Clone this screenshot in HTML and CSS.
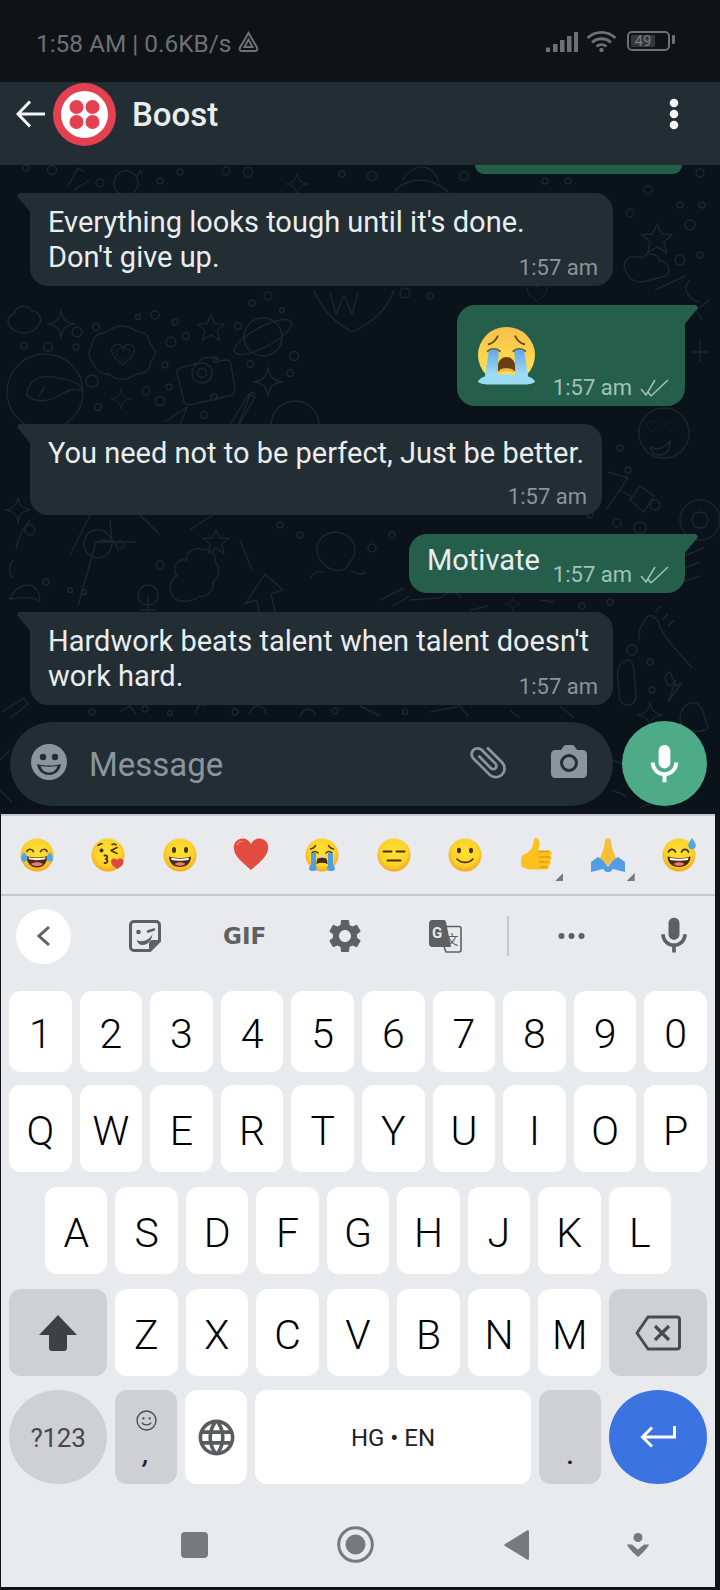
FILE: index.html
```html
<!DOCTYPE html>
<html lang="en">
<head>
<meta charset="utf-8">
<title>Boost</title>
<link rel="stylesheet" href="styles.css">
</head>
<body>
<svg class="defs" aria-hidden="true">
  <defs>
    <radialGradient id="face" cx="50%" cy="42%" r="58%">
      <stop offset="0%" stop-color="#fee133"/>
      <stop offset="70%" stop-color="#fdd22a"/>
      <stop offset="100%" stop-color="#f3a81c"/>
    </radialGradient>
    <linearGradient id="bigface" x1="0" y1="0" x2="0" y2="1">
      <stop offset="0%" stop-color="#f8c04a"/>
      <stop offset="55%" stop-color="#fbd64f"/>
      <stop offset="100%" stop-color="#fbe35d"/>
    </linearGradient>
    <linearGradient id="tear" x1="0" y1="0" x2="0" y2="1">
      <stop offset="0%" stop-color="#5fa8e8"/>
      <stop offset="100%" stop-color="#a6e0f5"/>
    </linearGradient>
    <symbol id="e-joy" viewBox="0 0 36 36">
      <circle cx="18" cy="18" r="16.5" fill="url(#face)"/>
      <path d="M8 14.5c1-3 5-3 6.5 0M21.5 14.5c1.500-3 5.500-3 6.500 0" fill="none" stroke="#5b3a12" stroke-width="1.700" stroke-linecap="round"/>
      <path d="M7.500 19c6.500 2 14.500 2 21 0 0 7-4.500 11.500-10.500 11.500S7.500 26 7.500 19z" fill="#4a2a12"/>
      <path d="M9.500 20.300c5 1.200 12 1.200 17 0l-.5 2c-5 1.100-11 1.100-16 0z" fill="#fff"/>
      <path d="M12 27c3-2.500 9-2.500 12 0-3 2.800-9 2.800-12 0z" fill="#ee7a7e"/>
      <path d="M5 15c2.500 3 4 5 3.500 7.500-.6 2.300-4.500 3-6 1C.8 21.400 3 17.500 5 15zM31 15c-2.500 3-4 5-3.500 7.500.6 2.300 4.500 3 6 1 1.700-2.100-.5-6-2.500-8.500z" fill="#52a8ea"/>
    </symbol>
    <symbol id="e-kiss" viewBox="0 0 36 36">
      <circle cx="18" cy="18" r="16.500" fill="url(#face)"/>
      <circle cx="11.500" cy="13.500" r="2" fill="#4a2d10"/>
      <path d="M8 8.500c1-1.200 2.500-1.800 4-1.800M21 13.500l6-3M21 13.500l6 3M22 7.500c1.500-.6 3-.4 4 .4" fill="none" stroke="#4a2d10" stroke-width="1.500" stroke-linecap="round"/>
      <path d="M14.500 18.500c2.800-.4 4 1.700 1.500 3.500 2.500 1.500 1.500 4.500-1.500 4" fill="none" stroke="#4a2d10" stroke-width="1.800" stroke-linecap="round"/>
      <path d="M27.500 32c-4-2-6.500-5-6.500-7.500 0-3.500 4.500-4 6-1.500 1.800-2.500 6.500-1.800 6.500 1.800 0 3-3 5.700-6 7.200z" fill="#df4b3e"/>
    </symbol>
    <symbol id="e-grin" viewBox="0 0 36 36">
      <circle cx="18" cy="18" r="16.500" fill="url(#face)"/>
      <ellipse cx="12" cy="13" rx="2" ry="3" fill="#4a2d10"/>
      <ellipse cx="24" cy="13" rx="2" ry="3" fill="#4a2d10"/>
      <path d="M7 19.500c7 2 15 2 22 0 0 6.500-4.500 10.500-11 10.500S7 26 7 19.500z" fill="#4a2a12"/>
      <path d="M9 20.700c5.500 1.300 12.500 1.300 18 0l-.6 2.200c-5.400 1-11.400 1-16.800 0z" fill="#fff"/>
      <path d="M12.500 27c3-2.200 8-2.200 11 0-3 2.400-8 2.400-11 0z" fill="#ee7a7e"/>
    </symbol>
    <symbol id="e-heart" viewBox="0 0 36 36">
      <path d="M18 33C9 25 .8 19 .8 10.500 .8 5 5 1.500 9.500 1.500c3.800 0 6.800 2 8.500 5.500 1.700-3.500 4.700-5.500 8.500-5.500C31 1.500 35.200 5 35.200 10.500 35.200 19 27 25 18 33z" fill="#e24c3e"/>
      <path d="M4 8c1-2.500 3-3.500 5-3.500" fill="none" stroke="#ee7a6e" stroke-width="1.500" stroke-linecap="round"/>
    </symbol>
    <symbol id="e-sob" viewBox="0 0 36 36">
      <circle cx="18" cy="18" r="16.500" fill="url(#face)"/>
      <path d="M6.500 12c2-.3 4-1.500 5-3.500M29.500 12c-2-.3-4-1.500-5-3.500M8 16c1.500-2 4.500-2 6 0M22 16c1.500-2 4.500-2 6 0" fill="none" stroke="#5b3a12" stroke-width="1.600" stroke-linecap="round"/>
      <path d="M12.500 27c0-5 2-8 5.500-8s5.500 3 5.500 8c-3.500-1.600-7.500-1.600-11 0z" fill="#4a2a12"/>
      <path d="M14 21.500c2.500-1.200 5.500-1.200 8 0-.4-1-1-1.800-1.800-2.200h-4.400c-.8.400-1.400 1.200-1.800 2.200z" fill="#fff"/>
      <path d="M7 16h5v13c1.500 1 1.500 4.500-2 5-3 .5-5.500-.8-5-3 .3-1.500 1.500-2.300 2-3zM29 16h-5v13c-1.500 1-1.500 4.500 2 5 3 .5 5.500-.8 5-3-.3-1.500-1.500-2.300-2-3z" fill="#4e9fe6"/>
    </symbol>
    <symbol id="e-flat" viewBox="0 0 36 36">
      <circle cx="18" cy="18" r="16.500" fill="url(#face)"/>
      <path d="M7.500 14.500h8M20.500 14.500h8M11.500 23.500h13" fill="none" stroke="#4a2d10" stroke-width="2" stroke-linecap="round"/>
    </symbol>
    <symbol id="e-smile" viewBox="0 0 36 36">
      <circle cx="18" cy="18" r="16.500" fill="url(#face)"/>
      <ellipse cx="12" cy="13.500" rx="2" ry="2.800" fill="#4a2d10"/>
      <ellipse cx="24" cy="13.500" rx="2" ry="2.800" fill="#4a2d10"/>
      <path d="M10 22c4 4.500 12 4.500 16 0" fill="none" stroke="#4a2d10" stroke-width="1.600" stroke-linecap="round"/>
    </symbol>
    <symbol id="e-thumb" viewBox="0 0 36 36">
      <path d="M4 18c4-1.500 7-4 9-7.500 1.500-3 1.500-5.500 2-8 .3-2 5-2 5.500 2.500.4 3.500-.8 6-1.500 8.500h11c3 0 3.500 4 1 5 2 1 2 4.500-.4 5 1.500 1.300 1 4.300-1 4.700.8 1.800-.3 4.300-2.600 4.300H14c-5 0-8-1.500-11-2.500C1.500 29 1.500 20 4 18z" fill="#fcc21b"/>
      <path d="M20 14.500h9.500M20.500 20h10M20.500 25h9.500M21 30h7" fill="none" stroke="#e59a11" stroke-width="1.300" stroke-linecap="round"/>
    </symbol>
    <symbol id="e-pray" viewBox="0 0 36 36">
      <path d="M1 35V25l7-5 5 3 5 7v5h-2l-3-3zM35 35V25l-7-5-5 3-5 7v5h2l3-3z" fill="#519ee6"/>
      <path d="M17.500 1c-2 0-2.500 2-3 6-.6 4.500-2.500 10-4.500 14l4 3 3.500 5zM18.500 1c2 0 2.500 2 3 6 .6 4.500 2.500 10 4.500 14l-4 3-3.500 5z" fill="#fbc02d"/>
      <path d="M18 2v26" stroke="#e59a11" stroke-width=".8"/>
    </symbol>
    <symbol id="e-sweat" viewBox="0 0 36 36">
      <circle cx="18" cy="18" r="16.500" fill="url(#face)"/>
      <path d="M7.500 15c1.500-3.500 5.500-3.500 7 0M20.500 15c1.500-3.500 5.500-3.500 7 0" fill="none" stroke="#4a2d10" stroke-width="1.700" stroke-linecap="round"/>
      <path d="M6.500 19.500c7.500 2 15.500 2 23 0 0 6.500-4.800 10.500-11.500 10.500S6.500 26 6.500 19.500z" fill="#4a2a12"/>
      <path d="M8.500 20.700c6 1.300 13 1.300 19 0l-.6 2.200c-5.800 1-12 1-17.800 0z" fill="#fff"/>
      <path d="M12.500 27c3-2.200 8-2.200 11 0-3 2.400-8 2.400-11 0z" fill="#ee7a7e"/>
      <path d="M31 1c1.800 3 3.800 5 3.800 7.500 0 2.200-1.800 3.700-3.800 3.700s-3.800-1.500-3.800-3.700C27.200 6 29.200 4 31 1z" fill="#4fa5e8"/>
    </symbol>
    <path id="mic-shape" d="M12 14c1.660 0 3-1.340 3-3V5c0-1.660-1.340-3-3-3S9 3.340 9 5v6c0 1.660 1.340 3 3 3zm5-3c0 2.760-2.240 5-5 5s-5-2.240-5-5H5c0 3.530 2.610 6.430 6 6.920V21h2v-3.080c3.390-.49 6-3.390 6-6.920h-2z"/>
    <symbol id="star5" viewBox="0 0 32 32"><path d="M16 2l4 9 10 1-7.500 7 2.500 10-9-5.500L7 29l2.500-10L2 12l10-1z"/></symbol>
    <symbol id="star4" viewBox="0 0 32 32"><path d="M16 1c1 8 3 13 15 15-11 1-14 6-15 15-1-9-4-14-15-15 12-2 14-7 15-15z"/></symbol>
    <symbol id="heart-o" viewBox="0 0 32 32"><path d="M16 28C8 22 2 17 2 10c0-4.500 3.500-7 7-7 3 0 5.500 1.500 7 5 1.500-3.500 4-5 7-5 3.500 0 7 2.500 7 7 0 7-6 12-14 18z"/></symbol>
  </defs>
</svg>

<div class="phone">
  <div class="status">
    <span class="status-text">1:58 AM | 0.6KB/s</span>
    <svg class="i-drive" viewBox="0 0 21 22"><path d="M10.500 2L19 16.500c.8 1.800 0 3.500-2 3.500H4c-2 0-2.800-1.700-2-3.500zM10.500 8.500L6.500 16h8z" fill="none" stroke="#6d7173" stroke-width="2"/></svg>
    <div class="status-right">
      <svg class="i-signal" viewBox="0 0 32 20"><path d="M0 15.500h4V20H0zM7 12h4.500v8H7zM14 8h4.500v12H14zM21 4h4.500v16H21zM28 0h4v20h-4z" fill="#6d7173"/></svg>
      <svg class="i-wifi" viewBox="0 0 31 22"><path d="M1.500 8c8-7.500 20-7.500 28 0M6 12.500c5.500-5 13.500-5 19 0M10.500 16.500c3-2.500 7-2.500 10 0" fill="none" stroke="#6d7173" stroke-width="2.800"/><circle cx="15.500" cy="20" r="2.200" fill="#6d7173"/></svg>
      <div class="battery"><span class="battery-level">49</span></div>
    </div>
  </div>

  <div class="header">
    <svg class="i-back" viewBox="0 0 30 28"><path d="M29 14H3M14 1.500L2 14l12 12.500" fill="none" stroke="#f2f4f5" stroke-width="3"/></svg>
    <svg class="avatar" viewBox="0 0 63 63">
      <circle cx="31.500" cy="31.500" r="31.500" fill="#e5404f"/>
      <circle cx="31.500" cy="31.500" r="23.500" fill="#fff"/>
      <circle cx="23.500" cy="24" r="7" fill="#e5404f"/><circle cx="39.500" cy="24" r="7" fill="#e5404f"/>
      <circle cx="23.500" cy="39" r="7" fill="#e5404f"/><circle cx="39.500" cy="39" r="7" fill="#e5404f"/>
    </svg>
    <span class="name">Boost</span>
    <svg class="i-kebab" viewBox="0 0 10 32"><circle cx="5" cy="5" r="4.300" fill="#f2f4f5"/><circle cx="5" cy="16" r="4.300" fill="#f2f4f5"/><circle cx="5" cy="27" r="4.300" fill="#f2f4f5"/></svg>
  </div>

  <div class="chat">
    <svg class="wallpaper" viewBox="0 165 720 649" aria-hidden="true">
      <g class="doodle">
        <path d="M14 330c-8-4-8-14 0-16 2-9 14-10 18-3 8 0 11 10 6 15-4 7-16 9-24 4z"/>
        <use href="#star4" x="46" y="309" width="30" height="30"/>
        <circle cx="77" cy="332" r="5"/><circle cx="96" cy="327" r="3.500"/><circle cx="48" cy="347" r="4.500"/><circle cx="24" cy="346" r="3"/><circle cx="76" cy="347" r="3"/>
        <path d="M122 326c8 0 10 4 15 5 6 1 12 4 12 10 0 3 6 6 6 12s-5 8-5 12c0 7-8 9-14 9-5 3-10 7-15 5-5 1-9-3-13-5-7 0-13-4-14-10-3-3-5-6-5-11 0-4 3-7 4-12 1-6 8-8 13-9 4-2 9-6 16-6z"/>
        <use href="#heart-o" x="108" y="342" width="30" height="26"/>
        <use href="#heart-o" x="114" y="347" width="18" height="16"/>
        <path d="M180 368l18-5 5-5 12-1 4 4 7-1c3 0 5 2 5 4l4 26c0 3-1 4-3 5l-42 10c-3 0-5-1-6-3l-7-29c0-3 1-4 3-5z"/>
        <circle cx="202" cy="373" r="10"/><circle cx="202" cy="373" r="4.500"/><circle cx="216" cy="360" r="2.500"/>
        <use href="#star5" x="196" y="313" width="30" height="30"/>
        <circle cx="171" cy="342" r="5"/><circle cx="186" cy="336" r="3.500"/><circle cx="175" cy="322" r="3"/><circle cx="155" cy="315" r="4"/><circle cx="138" cy="317" r="2.500"/>
        <circle cx="263" cy="337" r="19"/><ellipse cx="263" cy="337" rx="32" ry="10" transform="rotate(-28 263 337)"/>
        <use href="#star4" x="252" y="365" width="32" height="34"/>
        <circle cx="250" cy="364" r="3.500"/><circle cx="282" cy="310" r="2.500"/><circle cx="294" cy="356" r="4.500"/><circle cx="290" cy="373" r="3.500"/><circle cx="238" cy="326" r="3.500"/>
        <circle cx="45" cy="392" r="38"/><path d="M27 395c0-14 12-20 25-18 15 2 28 5 31 14-8-4-16 0-23 4-10 6-25 9-33 0z"/><path d="M38 397c3-3 4-7 7-10"/>
        <circle cx="92" cy="381" r="6"/><circle cx="98" cy="407" r="3.500"/><use href="#star4" x="110" y="388" width="22" height="22"/>
        <circle cx="146" cy="391" r="4"/><circle cx="160" cy="401" r="4.500"/><circle cx="169" cy="387" r="3"/><circle cx="165" cy="365" r="3"/><circle cx="204" cy="415" r="3.500"/><circle cx="214" cy="397" r="3"/>
        <path d="M165 422l22-15-9 24M230 425l-2 3 21-34 6 3-18 31M240 425l-3 3 14-36 5 2"/>
        <circle cx="295" cy="425" r="24"/>
        <path d="M400 186l8-4a24 12 0 0 1 24 0l8 4c6 3 10 6 8 10-3 4-10 4-20 3-12 0-28 0-32-5-1-3 1-6 4-8z"/>
        <path d="M402 181c3-8 13-14 20-14s14 6 16 14"/>
        <use href="#star4" x="285" y="172" width="24" height="24"/>
        <circle cx="100" cy="183" r="4"/><circle cx="52" cy="170" r="4.500"/><circle cx="26" cy="168" r="3"/><circle cx="160" cy="181" r="3"/><circle cx="180" cy="172" r="3"/><circle cx="226" cy="171" r="4"/><circle cx="248" cy="172" r="4.500"/><circle cx="342" cy="174" r="3"/><circle cx="372" cy="176" r="4.500"/><circle cx="464" cy="176" r="4.500"/><circle cx="545" cy="181" r="3"/><circle cx="568" cy="181" r="3"/>
        <path d="M138 183a12 12 0 1 1 0-.1zM136 178l4-7 3 3M90 180l-16 10M68 186l10-18 6 4"/>
        <path d="M330 292l6 22 8-18 8 18 6-22M314 290c8 20 20 32 38 42 22-10 36-24 42-42"/>
        <use href="#heart-o" x="525" y="282" width="24" height="22"/>
        <circle cx="405" cy="293" r="5"/><circle cx="430" cy="296" r="3"/><circle cx="268" cy="296" r="4"/><circle cx="252" cy="303" r="3"/>
        <use href="#star5" x="640" y="222" width="34" height="34"/><circle cx="630" cy="213" r="4"/><circle cx="648" cy="190" r="4"/><circle cx="700" cy="173" r="4"/><circle cx="690" cy="225" r="5"/><circle cx="702" cy="205" r="3"/><circle cx="680" cy="205" r="3"/>
        <path d="M624 265c2-8 10-10 18-7 4-6 16-5 18 3 8 0 12 10 6 15l-24 6c-8 0-16-4-18-17z"/>
        <circle cx="680" cy="260" r="5"/><circle cx="700" cy="255" r="3"/><path d="M655 290l30-14M690 280c-10 10 0 20 10 22M702 320l-6-10 14-10"/>
        <path d="M700 340v22M708 352h-16"/>
        <circle cx="664" cy="433" r="25"/><use href="#heart-o" x="645" y="420" width="14" height="13"/><use href="#heart-o" x="663" y="420" width="14" height="13"/><path d="M650 447c8 4 14 2 20-6 0 10-4 14-10 14s-9-3-10-8z"/>
        <circle cx="620" cy="448" r="3"/><circle cx="628" cy="470" r="3"/><path d="M608 472l20 6-22 32M620 490l14 8"/><path d="M630 500l14 12 10-16-14-10z"/>
        <circle cx="655" cy="505" r="5"/><circle cx="700" cy="520" r="20"/><circle cx="700" cy="520" r="8"/><circle cx="640" cy="528" r="6"/><path d="M684 556l20-8M680 570l20-8M676 584l24-8"/>
        <circle cx="617" cy="523" r="4"/><circle cx="590" cy="515" r="3"/>
        <path d="M640 640c-4-10 4-18 8-24 4-2 12 4 12 12 8 14 22 28 32 40M655 612l6-6M662 620l6-6M668 626l6-6"/>
        <path d="M630 660c-10 0-14 8-12 20l2 20c4 8 16 6 16-4l-2-24c0-6-2-10-4-12z"/>
        <circle cx="632" cy="650" r="5"/><circle cx="650" cy="662" r="3"/><circle cx="652" cy="690" r="3"/><path d="M670 672c-8 4-4 12 0 14l6-6-8 22 14-20-6 4z"/>
        <path d="M680 720c0-14 10-20 18-16 6 4 6 14 10 24 0 3-24 8-28-8z"/><use href="#star4" x="636" y="700" width="28" height="30"/>
        <path d="M14 560c-6 4-6 14 0 18M30 520c-6 8-12 16-14 30"/><use href="#star4" x="4" y="493" width="28" height="34"/>
        <path d="M30 585c-8 0-16 4-20 14 12-2 24-2 30 2 0-8-4-14-10-16z"/>
        <circle cx="46" cy="582" r="3"/><path d="M78 606l18-64h40"/><path d="M96 530a14 14 0 1 0 1-.1zM100 540l22 2M110 520l2 22"/><circle cx="70" cy="590" r="2.500"/><circle cx="84" cy="592" r="2.500"/>
        <path d="M148 585a10 10 0 1 0 .1 0zM148 596v14M140 610h16"/>
        <path d="M177 600c-10-6-8-20 0-24-6-8 0-18 10-16-2-8 8-14 16-10 6-2 14 4 12 12 6 6 4 16-2 20 2 8-6 16-14 14-6 6-16 6-22 4z"/>
        <path d="M245 604l20-30 18 16-12 4 4 18-16 2-2-14z"/>
        <path d="M320 560c-8-14 0-26 14-28 14 0 24 10 20 24l-8 12c-4 4-18 4-26-8zM310 578c4-6 8-8 14-6M350 570c6 4 12 6 16 2"/>
        <path d="M380 600l24-12M392 606l18-10M140 515l20 20M190 530l24-16M240 540l12 30M90 515l-20 40"/>
        <use href="#star5" x="202" y="528" width="28" height="28"/>
        <circle cx="30" cy="530" r="5"/><circle cx="120" cy="545" r="4"/><circle cx="160" cy="565" r="4"/><circle cx="280" cy="525" r="3"/><circle cx="300" cy="535" r="3"/><circle cx="372" cy="548" r="4"/><circle cx="392" cy="535" r="3"/>
        <path d="M410 600l30-2 12-8 10 8M470 610l18-4M540 600l14 2"/>
        <use href="#star4" x="505" y="596" width="16" height="16"/><circle cx="582" cy="606" r="3"/><circle cx="610" cy="602" r="3"/>
        <path d="M2 712l22-14 4 6-18 14M120 712l10-6 6 8M195 714c2-8 6-12 10-8M250 714a8 8 0 0 1 16 0M300 716c4-8 12-10 16 0M360 706l20 10M430 712l30-6 8 10M510 710l10 8M560 706l14 12"/>
        <circle cx="92" cy="712" r="3"/><circle cx="145" cy="709" r="3"/><circle cx="170" cy="713" r="2.500"/><circle cx="235" cy="712" r="3"/><circle cx="335" cy="711" r="3"/><circle cx="405" cy="712" r="2.500"/>
        <path d="M0 760l10-10M0 790l12 12M612 760l10 4M612 790l14 6M640 808c4-4 20-6 30 0"/>
      </g>
    </svg>

    <div class="strip"></div>

    <div class="bubble in wide-in">
      <p class="msg">Everything looks tough until it's done.<br>Don't give up.</p>
      <span class="time overlap">1:57 am</span>
    </div>

    <div class="bubble out emoji-bubble">
      <svg class="big-sob" viewBox="0 0 60 60">
        <ellipse cx="30" cy="29" rx="29" ry="28.500" fill="url(#bigface)"/>
        <path d="M12 18c4-1 7-4 9-8M48 18c-4-1-7-4-9-8" fill="none" stroke="#6d4a1c" stroke-width="2" stroke-linecap="round"/>
        <path d="M11 25c3-3 9-3 12 0M37 25c3-3 9-3 12 0" fill="none" stroke="#6d4a1c" stroke-width="2" stroke-linecap="round"/>
        <path d="M20 46c0-9 4-15 10-15s10 6 10 15c-6-2.500-14-2.500-20 0z" fill="#6a3d12"/>
        <path d="M23 44c4-2 10-2 14 0l1 3c-5-2-11-2-16 0z" fill="#f3b63c"/>
        <path d="M12 25c3-2 7-2 10 0l-1 26H8zM38 25c3-2 7-2 10 0l4 26H39z" fill="url(#tear)"/>
        <path d="M1 56c2-4 6-5 10-6 12-2 26-2 38 0 4 1 8 2 10 6-1 2-6 3-10 3H11c-4 0-9-1-10-3z" fill="#9bdcf3"/>
      </svg>
      <div class="meta">
        <span class="time out-time">1:57 am</span>
        <svg class="i-checks" viewBox="0 0 29 18"><path d="M1 10l5 6L15 1M11 17L28 1M8 13l3 4" fill="none" stroke="#a0c4b6" stroke-width="1.500"/></svg>
      </div>
    </div>

    <div class="bubble in narrow-in">
      <p class="msg">You need not to be perfect, Just be better.</p>
      <span class="time below">1:57 am</span>
    </div>

    <div class="bubble out text-out">
      <p class="msg out-msg">Motivate</p>
      <div class="meta">
        <span class="time out-time">1:57 am</span>
        <svg class="i-checks" viewBox="0 0 29 18"><path d="M1 10l5 6L15 1M11 17L28 1M8 13l3 4" fill="none" stroke="#a0c4b6" stroke-width="1.500"/></svg>
      </div>
    </div>

    <div class="bubble in wide-in">
      <p class="msg">Hardwork beats talent when talent doesn't<br>work hard.</p>
      <span class="time overlap">1:57 am</span>
    </div>

    <div class="composer">
      <div class="input">
        <svg class="i-smile" viewBox="0 0 36 36">
          <circle cx="18" cy="18" r="18" fill="#8a959e"/>
          <circle cx="12" cy="13" r="3.200" fill="#222d34"/><circle cx="24" cy="13" r="3.200" fill="#222d34"/>
          <path d="M6 20c7 2 17 2 24 0-1 7-6 11-12 11S7 27 6 20z" fill="#222d34"/>
          <path d="M9.500 22c5.500 1 11.500 1 17 0-1.500 4.500-4.800 6.500-8.500 6.500S11 26.500 9.500 22z" fill="#8a959e"/>
        </svg>
        <span class="placeholder">Message</span>
        <svg class="i-clip" viewBox="0 0 24 24"><path transform="rotate(-45 12 12)" d="M16.500 6v11.500c0 2.210-1.790 4-4 4s-4-1.790-4-4V5a2.500 2.500 0 0 1 5 0v10.500c0 .55-.45 1-1 1s-1-.45-1-1V6H10v9.500a2.500 2.500 0 0 0 5 0V5c0-2.210-1.790-4-4-4S7 2.790 7 5v12.500c0 3.040 2.460 5.500 5.500 5.500s5.500-2.460 5.500-5.500V6h-1.500z" fill="#8a959e"/></svg>
        <svg class="i-camera" viewBox="0 0 36 33">
          <path d="M4 5h6l2-3c.5-1 1.500-2 3-2h6c1.500 0 2.500 1 3 2l2 3h6c2 0 4 2 4 4v20c0 2-2 4-4 4H4c-2 0-4-2-4-4V9c0-2 2-4 4-4z" fill="#8a959e"/>
          <circle cx="18" cy="18" r="7.500" fill="none" stroke="#222d34" stroke-width="3"/>
        </svg>
      </div>
      <div class="fab"><svg class="i-fabmic" viewBox="0 0 24 24"><use href="#mic-shape" fill="#fff"/></svg></div>
    </div>
  </div>

  <div class="keyboard">
    <div class="suggestions">
      <div class="emoji"><svg class="e"><use href="#e-joy"/></svg></div>
      <div class="emoji"><svg class="e"><use href="#e-kiss"/></svg></div>
      <div class="emoji"><svg class="e"><use href="#e-grin"/></svg></div>
      <div class="emoji"><svg class="e"><use href="#e-heart"/></svg></div>
      <div class="emoji"><svg class="e"><use href="#e-sob"/></svg></div>
      <div class="emoji"><svg class="e"><use href="#e-flat"/></svg></div>
      <div class="emoji"><svg class="e"><use href="#e-smile"/></svg></div>
      <div class="emoji more"><svg class="e"><use href="#e-thumb"/></svg></div>
      <div class="emoji more"><svg class="e"><use href="#e-pray"/></svg></div>
      <div class="emoji"><svg class="e"><use href="#e-sweat"/></svg></div>
    </div>

    <div class="toolbar">
      <div class="tb-back"><svg class="i-chev" viewBox="0 0 16 22"><path d="M13 2L3 11l10 9" fill="none" stroke="#5f6062" stroke-width="3"/></svg></div>
      <svg class="i-sticker" viewBox="0 0 32 32">
        <path d="M5 1.500h22c2 0 3.500 1.500 3.500 3.500v16L21 30.500H5c-2 0-3.500-1.500-3.500-3.500V5C1.500 3 3 1.500 5 1.500z" fill="none" stroke="#5f6062" stroke-width="3"/>
        <path d="M30 20h-6c-2.500 0-4 1.500-4 4v6z" fill="#5f6062"/>
        <circle cx="9.500" cy="12" r="2.300" fill="#5f6062"/><path d="M19 11.500l6-2" stroke="#5f6062" stroke-width="2.600" stroke-linecap="round"/>
        <path d="M7.500 20c6 3 13 0 16-6-1 8-6 11-10 11-3 0-5-2-6-5z" fill="#5f6062"/>
      </svg>
      <span class="gif">GIF</span>
      <svg class="i-gear" viewBox="0 0 24 24"><path fill="#5f6062" d="M19.140 12.940c.04-.3.060-.61.060-.94 0-.32-.020-.64-.070-.94l2.030-1.580c.18-.14.23-.41.120-.61l-1.920-3.320c-.12-.22-.37-.29-.59-.22l-2.390.96c-.5-.38-1.030-.7-1.620-.94l-.36-2.540c-.04-.24-.24-.41-.48-.41h-3.840c-.24 0-.43.170-.47.410l-.36 2.540c-.59.240-1.130.570-1.620.940l-2.390-.96c-.22-.08-.47 0-.59.220L2.740 8.870c-.12.21-.08.47.120.610l2.030 1.580c-.05.3-.09.63-.09.940s.020.640.070.940l-2.030 1.580c-.18.14-.23.41-.12.610l1.920 3.320c.12.220.37.290.59.220l2.390-.96c.5.380 1.030.7 1.620.940l.36 2.540c.05.240.24.41.48.41h3.840c.24 0 .44-.17.47-.41l.36-2.540c.59-.24 1.130-.56 1.620-.94l2.390.96c.22.08.47 0 .59-.22l1.920-3.320c.12-.22.070-.47-.12-.61l-2.010-1.580zM12 15.600c-1.980 0-3.600-1.620-3.600-3.600s1.620-3.600 3.600-3.600 3.600 1.620 3.600 3.600-1.620 3.600-3.600 3.600z"/></svg>
      <svg class="i-translate" viewBox="0 0 33 33">
        <path d="M14 6.500h16c1 0 2 1 2 2V30c0 1-1 2-2 2H17l-2-5" fill="none" stroke="#5f6062" stroke-width="1.600"/>
        <path d="M3 0h12c1 0 2 1 2 2l5 25H3c-1.500 0-3-1.500-3-3V3C0 1.500 1.500 0 3 0z" fill="#5f6062"/>
        <text x="8" y="18" class="tr-g">G</text>
        <text x="23" y="24" class="tr-x">文</text>
      </svg>
      <span class="tb-sep"></span>
      <svg class="i-dots" viewBox="0 0 27 8"><circle cx="3.500" cy="4" r="3" fill="#5f6062"/><circle cx="13.500" cy="4" r="3" fill="#5f6062"/><circle cx="23.500" cy="4" r="3" fill="#5f6062"/></svg>
      <svg class="i-kbmic" viewBox="0 0 24 24"><use href="#mic-shape" fill="#5f6062"/></svg>
    </div>

    <div class="keys">
      <div class="key-row">
        <span class="key">1</span><span class="key">2</span><span class="key">3</span><span class="key">4</span><span class="key">5</span><span class="key">6</span><span class="key">7</span><span class="key">8</span><span class="key">9</span><span class="key">0</span>
      </div>
      <div class="key-row r-qwerty">
        <span class="key">Q</span><span class="key">W</span><span class="key">E</span><span class="key">R</span><span class="key">T</span><span class="key">Y</span><span class="key">U</span><span class="key">I</span><span class="key">O</span><span class="key">P</span>
      </div>
      <div class="key-row r-home">
        <span class="key">A</span><span class="key">S</span><span class="key">D</span><span class="key">F</span><span class="key">G</span><span class="key">H</span><span class="key">J</span><span class="key">K</span><span class="key">L</span>
      </div>
      <div class="key-row r-z">
        <span class="key wide special"><svg class="i-shift" viewBox="0 0 38 36"><path d="M19 0l19 20H28v13c0 2-1 3-3 3H13c-2 0-3-1-3-3V20H0z" fill="#3f4042"/></svg></span>
        <span class="key">Z</span><span class="key">X</span><span class="key">C</span><span class="key">V</span><span class="key">B</span><span class="key">N</span><span class="key">M</span>
        <span class="key wide special"><svg class="i-bksp" viewBox="0 0 46 36"><path d="M13 2h29c1.500 0 2.500 1 2.500 2.500v27c0 1.500-1 2.500-2.500 2.500H13L2 18z" fill="none" stroke="#4a4b4d" stroke-width="3" stroke-linejoin="round"/><path d="M20 11l14 14M34 11L20 25" stroke="#4a4b4d" stroke-width="3.200"/></svg></span>
      </div>
      <div class="key-row r-bottom">
        <span class="key wide special round sym">?123</span>
        <span class="key special stack">
          <svg class="i-kbsmile" viewBox="0 0 20 20"><circle cx="10" cy="10" r="9" fill="none" stroke="#4a4b4d" stroke-width="1.300"/><circle cx="7" cy="8" r="1.100" fill="#4a4b4d"/><circle cx="13" cy="8" r="1.100" fill="#4a4b4d"/><path d="M5.500 12c2 3 7 3 9 0" fill="none" stroke="#4a4b4d" stroke-width="1.200"/></svg>
          <span class="comma">,</span>
        </span>
        <span class="key globe-key"><svg class="i-globe" viewBox="0 0 24 24"><path fill="#5a5b5d" d="M11.990 2C6.470 2 2 6.480 2 12s4.470 10 9.990 10C17.520 22 22 17.520 22 12S17.520 2 11.990 2zm6.930 6h-2.950c-.32-1.250-.78-2.450-1.380-3.560 1.840.63 3.370 1.910 4.330 3.560zM12 4.040c.83 1.200 1.480 2.530 1.910 3.960h-3.820c.43-1.430 1.080-2.760 1.910-3.960zM4.260 14C4.100 13.360 4 12.690 4 12s.1-1.360.26-2h3.380c-.08.66-.14 1.320-.14 2 0 .68.060 1.340.14 2H4.260zm.82 2h2.950c.32 1.250.78 2.450 1.380 3.560-1.840-.63-3.370-1.900-4.330-3.560zm2.950-8H5.080c.96-1.660 2.490-2.930 4.330-3.560C8.810 5.550 8.350 6.750 8.030 8zM12 19.960c-.83-1.200-1.480-2.530-1.910-3.960h3.820c-.43 1.430-1.080 2.760-1.910 3.960zM14.340 14H9.660c-.09-.66-.16-1.320-.16-2 0-.68.070-1.350.16-2h4.680c.09.650.16 1.320.16 2 0 .68-.07 1.340-.16 2zm.25 5.560c.6-1.110 1.060-2.310 1.380-3.560h2.950c-.96 1.650-2.490 2.930-4.330 3.560zM16.360 14c.08-.66.14-1.320.14-2 0-.68-.06-1.340-.14-2h3.380c.16.640.26 1.310.26 2s-.1 1.360-.26 2h-3.380z"/></svg></span>
        <span class="key space">HG • EN</span>
        <span class="key special stack dot-key"><span class="period">.</span></span>
        <span class="key wide enter"><svg class="i-enter" viewBox="0 0 36 22"><path d="M34.500 0v11H3M12 1.500L2.500 11l9.500 9.500" fill="none" stroke="#fff" stroke-width="3"/></svg></span>
      </div>
    </div>

    <div class="navbar">
      <span class="nav-square"></span>
      <svg class="i-home" viewBox="0 0 37 37"><circle cx="18.500" cy="18.500" r="16.800" fill="none" stroke="#78797b" stroke-width="3"/><circle cx="18.500" cy="18.500" r="10" fill="#78797b"/></svg>
      <svg class="i-navback" viewBox="0 0 25 30"><path d="M25 1v28c0 1-1 1-2 .5L1 16c-1-.5-1-1.500 0-2L23 .5C24 0 25 0 25 1z" fill="#78797b"/></svg>
      <svg class="i-navdown" viewBox="0 0 22 24"><circle cx="11" cy="4.500" r="4.500" fill="#78797b"/><path d="M0 11.500l5 0 6 5 6-5 5 0c0 0-1 4-11 12.500C1 15.500 0 11.500 0 11.500z" fill="#78797b"/></svg>
    </div>
  </div>
</div>
</body>
</html>
```

FILE: styles.css
```css
* { box-sizing: border-box; }

html, body {
  margin: 0;
  padding: 0;
}

body {
  width: 720px;
  height: 1590px;
  overflow: hidden;
  background: #111416;
  font-family: Roboto, "Noto Sans", sans-serif;
}

.defs {
  position: absolute;
  width: 0;
  height: 0;
}

.phone {
  display: flex;
  flex-direction: column;
  height: 1590px;
  padding-bottom: 3px;
}

/* status bar */
.status {
  flex: 0 0 82px;
  display: flex;
  align-items: center;
  padding: 4px 48px 0 36px;
  background: #0f1316;
}

.status-text {
  font-size: 24.400px;
  color: #6d7173;
  white-space: nowrap;
}

.i-drive {
  width: 21px;
  height: 22px;
  margin: -2px 0 0 7px;
}

.status-right {
  display: flex;
  align-items: center;
  margin-left: auto;
}

.i-signal {
  width: 32px;
  height: 20px;
  margin-top: -2px;
}

.i-wifi {
  width: 31px;
  height: 22px;
  margin: -4px 0 0 8px;
}

.battery {
  position: relative;
  width: 43px;
  height: 20px;
  margin: -4px 2px 0 10px;
  padding: 2px;
  border: 2px solid #6d7173;
  border-radius: 5px;
}

.battery::after {
  content: "";
  position: absolute;
  top: 2px;
  right: -7px;
  width: 3px;
  height: 9px;
  border-radius: 1px;
  background: #6d7173;
}

.battery-level {
  display: flex;
  align-items: center;
  justify-content: center;
  width: 24px;
  height: 12px;
  border-radius: 1px;
  background: #34383a;
  color: #7b7f81;
  font-size: 15px;
  line-height: 12px;
}

/* header */
.header {
  flex: 0 0 83px;
  display: flex;
  align-items: center;
  padding: 0 41px 19px 16px;
  background: #222d34;
}

.i-back {
  width: 30px;
  height: 28px;
}

.avatar {
  width: 63px;
  height: 63px;
  margin-left: 7px;
}

.name {
  margin-left: 16px;
  font-size: 33px;
  font-weight: 500;
  color: #e9edef;
}

.i-kebab {
  width: 10px;
  height: 32px;
  margin-left: auto;
}

/* chat */
.chat {
  position: relative;
  flex: 0 0 649px;
  display: flex;
  flex-direction: column;
  overflow: hidden;
  background: #0a1319;
}

.wallpaper {
  position: absolute;
  top: 0;
  left: 0;
  width: 720px;
  height: 649px;
}

.doodle {
  fill: none;
  stroke: #1c272d;
  stroke-width: 1.400;
}

.strip {
  position: relative;
  flex: 0 0 9px;
  width: 207px;
  margin-left: 475px;
  border-radius: 0 0 14px 14px;
  background: #265e4c;
}

.bubble {
  position: relative;
  margin-top: 19px;
}

.bubble::before {
  content: "";
  position: absolute;
  top: 0;
  width: 14px;
  height: 20px;
}

.in {
  display: flex;
  flex-direction: column;
  margin-left: 30px;
  padding: 12px 15px 6px 18px;
  border-radius: 0 18px 18px 18px;
  background: #222d34;
}

.in::before {
  left: -13px;
  background: #222d34;
  clip-path: polygon(2px 0, 14px 0, 14px 100%, 0 3px);
}

.wide-in { width: 583px; height: 93px; }
.narrow-in { width: 572px; height: 91px; margin-top: 18px; }

.out {
  display: flex;
  align-self: flex-start;
  margin-left: 0;
  border-radius: 18px 0 18px 18px;
  background: #265e4c;
}

.out::before {
  right: -13px;
  background: #265e4c;
  clip-path: polygon(0 0, 12px 0, 14px 3px, 0 100%);
}

.emoji-bubble {
  width: 228px;
  height: 101px;
  margin-left: 457px;
  padding: 21px 16px 6px 20px;
}

.text-out {
  width: 276px;
  height: 59px;
  margin-left: 409px;
  padding: 9px 16px 6px 18px;
}

.msg {
  margin: 0;
  font-size: 29px;
  line-height: 35px;
  color: #e9edef;
  white-space: nowrap;
}

.out-msg {
  flex: 1;
}

.time {
  font-size: 22px;
  line-height: 24px;
  color: #8a959c;
  white-space: nowrap;
}

.overlap {
  align-self: flex-end;
  margin-top: -19px;
}

.below {
  align-self: flex-end;
  margin-top: 14px;
}

.big-sob {
  flex: 0 0 59px;
  width: 59px;
  height: 60px;
}

.meta {
  display: flex;
  align-items: center;
  align-self: flex-end;
  margin-left: auto;
}

.out-time {
  color: #a0c4b6;
}

.i-checks {
  width: 29px;
  height: 18px;
  margin-left: 8px;
}

.composer {
  position: relative;
  display: flex;
  align-items: center;
  gap: 9px;
  margin: 16px 0 0 10px;
}

.input {
  flex: 0 0 603px;
  display: flex;
  align-items: center;
  height: 84px;
  padding: 0 26px 0 21px;
  border-radius: 42px;
  background: #222d34;
}

.i-smile {
  width: 36px;
  height: 36px;
  margin-top: -4px;
}

.placeholder {
  margin: 2px 0 0 22px;
  font-size: 33px;
  color: #8a959e;
}

.i-clip {
  width: 44px;
  height: 44px;
  margin: -4px 0 0 auto;
}

.i-camera {
  width: 36px;
  height: 33px;
  margin: -4px 0 0 41px;
}

.fab {
  flex: 0 0 85px;
  display: flex;
  align-items: center;
  justify-content: center;
  width: 85px;
  height: 85px;
  border-radius: 50%;
  background: #4dab88;
}

.i-fabmic {
  width: 47px;
  height: 47px;
  margin-top: 1px;
}

/* keyboard */
.keyboard {
  flex: 1;
  display: flex;
  flex-direction: column;
  width: 714px;
  margin-left: 1px;
  border-top: 2px solid #c7c9cd;
  background: #e8eaed;
}

.suggestions {
  flex: 0 0 80px;
  display: flex;
  align-items: center;
  border-bottom: 2px solid #c7c9cd;
}

.emoji {
  position: relative;
  flex: 1;
  display: flex;
  align-items: center;
  justify-content: center;
  height: 76px;
}

.e {
  width: 36px;
  height: 36px;
}

.more::after {
  content: "";
  position: absolute;
  right: 9px;
  bottom: 12px;
  width: 8px;
  height: 8px;
  background: #77787a;
  clip-path: polygon(100% 0, 100% 100%, 0 100%);
}

.toolbar {
  flex: 0 0 80px;
  display: flex;
  align-items: center;
  padding-left: 15px;
}

.tb-back {
  display: flex;
  align-items: center;
  justify-content: center;
  width: 55px;
  height: 55px;
  border-radius: 50%;
  background: #fff;
}

.i-chev {
  width: 16px;
  height: 22px;
}

.i-sticker {
  width: 32px;
  height: 32px;
  margin-left: 58px;
}

.gif {
  margin-left: 62px;
  font-family: "DejaVu Sans", sans-serif;
  font-size: 23px;
  font-weight: 700;
  line-height: 1;
  color: #5f6062;
}

.i-gear {
  width: 40px;
  height: 40px;
  margin-left: 59px;
}

.i-translate {
  width: 33px;
  height: 33px;
  margin-left: 64px;
}

.tr-g {
  font-family: Roboto, sans-serif;
  font-size: 15px;
  font-weight: 700;
  fill: #e8eaed;
  text-anchor: middle;
}

.tr-x {
  font-family: "Noto Sans CJK SC", sans-serif;
  font-size: 13px;
  fill: #5f6062;
  text-anchor: middle;
}

.tb-sep {
  width: 2px;
  height: 40px;
  margin-left: 45px;
  background: #c7c9cd;
}

.i-dots {
  width: 27px;
  height: 8px;
  margin-left: 49px;
}

.i-kbmic {
  width: 44px;
  height: 44px;
  margin-left: 67px;
}

.keys {
  display: flex;
  flex-direction: column;
  padding: 15px 8px 0;
}

.key-row {
  display: flex;
  gap: 8px;
  height: 81px;
}

.r-qwerty { height: 87px; margin-top: 13px; }
.r-home { height: 87px; margin-top: 15px; padding: 0 36px; }
.r-z { height: 87px; margin-top: 15px; }
.r-bottom { height: 94px; margin-top: 14px; }

.key {
  flex: 1 1 0;
  display: flex;
  align-items: center;
  justify-content: center;
  padding-top: 5px;
  border-radius: 12px;
  background: #fff;
  font-family: Roboto, sans-serif;
  font-size: 41px;
  font-weight: 300;
  color: #000;
}

.wide {
  flex: 0 0 98px;
}

.special {
  background: #ced0d4;
}

.round {
  border-radius: 50%;
}

.sym {
  font-size: 26px;
  font-weight: 400;
  letter-spacing: -0.3px;
  color: #47484a;
  padding-top: 2px;
}

.stack {
  flex: 0 0 62px;
  flex-direction: column;
  justify-content: flex-start;
  padding-top: 20px;
}

.globe-key {
  flex: 0 0 62px;
  padding-top: 0;
}

.dot-key {
  padding-top: 52px;
}

.comma,
.period {
  font-size: 24px;
  line-height: 28px;
  font-weight: 700;
  color: #222;
}

.comma {
  margin-top: 10px;
  font-style: italic;
}

.space {
  font-size: 24px;
  font-weight: 400;
  color: #222;
  padding-top: 2px;
}

.enter {
  border-radius: 50%;
  background: #3b74e0;
  padding-top: 0;
}

.i-shift { width: 38px; height: 36px; margin-top: -5px; }
.i-bksp { width: 46px; height: 36px; margin-top: -5px; }
.i-kbsmile { width: 21px; height: 21px; }
.i-globe { width: 43px; height: 43px; }
.i-enter { width: 36px; height: 22px; }

/* navigation */
.navbar {
  flex: 1;
  display: flex;
  align-items: center;
  padding: 18px 0 0 180px;
}

.nav-square {
  width: 27px;
  height: 26px;
  border-radius: 4px;
  background: #78797b;
}

.i-home { width: 37px; height: 37px; margin-left: 129px; }
.i-navback { width: 25px; height: 30px; margin-left: 130px; }
.i-navdown { width: 22px; height: 24px; margin-left: 98px; }
```
